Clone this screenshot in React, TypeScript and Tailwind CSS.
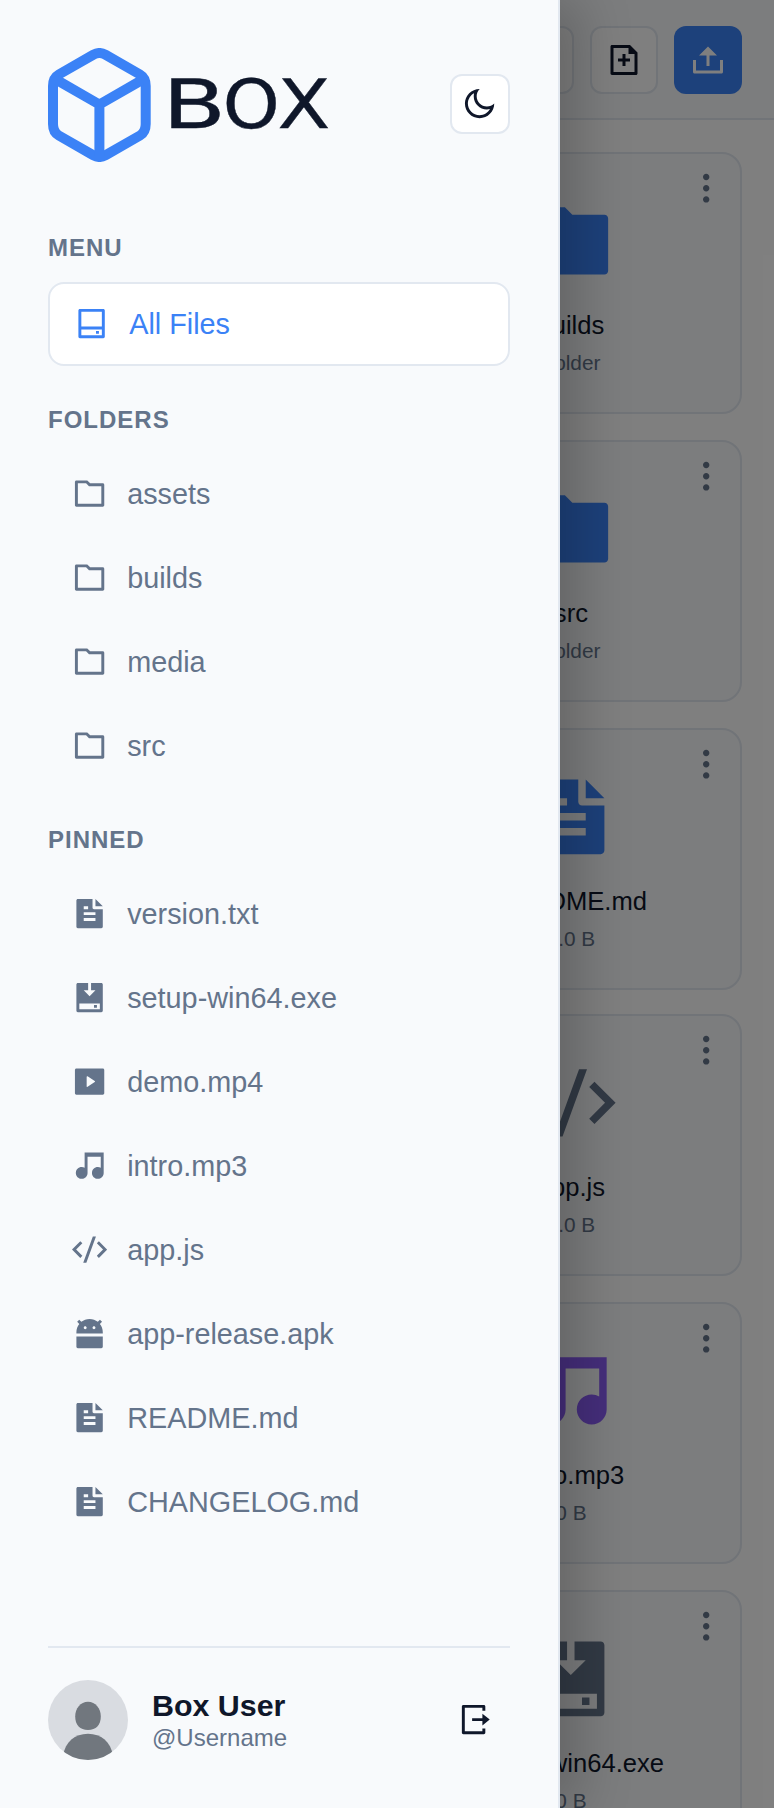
import type { IconType } from "react-icons";
import {
  RiAndroidFill,
  RiCodeSSlashFill,
  RiFileAddLine,
  RiFileTextFill,
  RiFolderAddLine,
  RiFolderFill,
  RiFolderLine,
  RiHardDrive2Line,
  RiInstallFill,
  RiLogoutBoxRLine,
  RiMoonLine,
  RiMore2Fill,
  RiMovieFill,
  RiMusic2Fill,
  RiUpload2Line,
} from "react-icons/ri";

interface Entry {
  name: string;
  icon: IconType;
}

interface Card extends Entry {
  meta: string;
  color: string;
}

const folders = ["assets", "builds", "media", "src"];

const pinned: Entry[] = [
  { name: "version.txt", icon: RiFileTextFill },
  { name: "setup-win64.exe", icon: RiInstallFill },
  { name: "demo.mp4", icon: RiMovieFill },
  { name: "intro.mp3", icon: RiMusic2Fill },
  { name: "app.js", icon: RiCodeSSlashFill },
  { name: "app-release.apk", icon: RiAndroidFill },
  { name: "README.md", icon: RiFileTextFill },
  { name: "CHANGELOG.md", icon: RiFileTextFill },
];

const cards: Card[] = [
  { name: "builds", meta: "Folder", icon: RiFolderFill, color: "text-[#3b82f6]" },
  { name: "src", meta: "Folder", icon: RiFolderFill, color: "text-[#3b82f6]" },
  { name: "README.md", meta: "1.0 B", icon: RiFileTextFill, color: "text-[#3b82f6]" },
  { name: "app.js", meta: "1.0 B", icon: RiCodeSSlashFill, color: "text-[#64748b]" },
  { name: "intro.mp3", meta: "0 B", icon: RiMusic2Fill, color: "text-[#8b5cf6]" },
  { name: "setup-win64.exe", meta: "0 B", icon: RiInstallFill, color: "text-[#64748b]" },
];

// the music note is drawn left of centre in its box
const nudge = (icon: IconType) => (icon === RiMusic2Fill ? "translate-x-[6.7%]" : "");

function Logo() {
  return (
    <svg width="282" height="114" viewBox="0 0 282 114" className="shrink-0">
      <g fill="none" stroke="#3b82f6" strokeWidth="10" strokeLinejoin="round">
        <path d="M45.500 6.600Q51.400 3.400 57.300 6.600L92 26.500Q97.700 29.800 97.700 38V76Q97.700 84.200 92 87.500L57.300 107.400Q51.400 110.600 45.500 107.400L10.800 87.500Q5 84.200 5 76V38Q5 29.800 10.800 26.500Z" />
        <path d="M9 32.200L51.400 56.500L93.800 32.200M51.400 56.500V108" />
      </g>
      <g
        fill="#0f172a"
        stroke="#0f172a"
        strokeWidth="0.4"
        fontFamily="DejaVu Sans"
        fontSize="67"
      >
        <text transform="translate(114.400 79.500) scale(1.38 1)">B</text>
        <text transform="translate(174.800 79.500) scale(1.08 1)">O</text>
        <text transform="translate(229.600 79.500) scale(1.15 1)">X</text>
      </g>
    </svg>
  );
}

function Avatar() {
  return (
    <svg width="80" height="80" viewBox="0 0 80 80" className="shrink-0 rounded-full">
      <rect width="80" height="80" fill="#d9dce1" />
      <path d="M40 21.700C47.500 21.700 52.800 28.500 52.800 36.500C52.800 45 48 50 40 50C32 50 27.200 45 27.200 36.500C27.200 28.500 32.500 21.700 40 21.700Z" fill="#71777e" />
      <path d="M15 76C17 62 27 53.800 40 53.800S63 62 65 76V80H15Z" fill="#71777e" />
    </svg>
  );
}

function Label({ children }: { children: string }) {
  return (
    <h3 className="mt-9 mb-5 h-7 text-[24px] leading-7 font-bold tracking-[1px] text-[#64748b]">
      {children}
    </h3>
  );
}

function NavItem({ name, icon: Icon, active }: Entry & { active?: boolean }) {
  return (
    <a
      className={`mb-1 flex items-center gap-5 rounded-[16px] px-6 text-[28.8px] ${
        active
          ? "h-[84px] border-2 border-[#e2e8f0] bg-white text-[#3b82f6]"
          : "h-20 text-[#64748b]"
      }`}
    >
      <Icon className={`size-[35.2px] shrink-0 ${nudge(Icon)}`} />
      <span className="pt-0.5">{name}</span>
    </a>
  );
}

function Sidebar() {
  return (
    <aside className="absolute inset-y-0 left-0 z-20 flex w-[560px] flex-col border-r-2 border-[#e2e8f0] bg-[#f8fafc] p-12 shadow-[20px_0_50px_rgba(0,0,0,0.2)]">
      <div className="flex h-[114px] items-center justify-between">
        <Logo />
        <button className="mb-0.5 flex size-[60px] items-center justify-center rounded-[12px] border-2 border-[#e2e8f0] bg-white text-[#0f172a]">
          <RiMoonLine className="size-[35.2px]" />
        </button>
      </div>

      <nav className="mt-9 flex flex-1 flex-col">
        <Label>MENU</Label>
        <NavItem name="All Files" icon={RiHardDrive2Line} active />
        <Label>FOLDERS</Label>
        {folders.map((name) => (
          <NavItem key={name} name={name} icon={RiFolderLine} />
        ))}
        <Label>PINNED</Label>
        {pinned.map((item) => (
          <NavItem key={item.name} {...item} />
        ))}
      </nav>

      {/* User */}
      <div className="flex items-center gap-6 border-t-2 border-[#e2e8f0] pt-8">
        <Avatar />
        <div className="flex-1">
          <div className="text-[30.4px] leading-[35px] font-bold text-[#0f172a]">Box User</div>
          <div className="text-[24px] leading-[30px] text-[#64748b]">@Username</div>
        </div>
        <RiLogoutBoxRLine className="mr-[19px] size-[35.2px] text-[#0f172a]" />
      </div>
    </aside>
  );
}

function FileCard({ name, meta, icon: Icon, color }: Card) {
  return (
    <div className="relative flex h-[262px] flex-col items-center rounded-[20px] border-2 border-[#e2e8f0] bg-[#f8fafc] pt-[42px]">
      <RiMore2Fill className="absolute top-[15px] right-[15px] size-[38.4px] text-[#64748b]" />
      <Icon className={`size-[89.6px] shrink-0 ${color} ${nudge(Icon)}`} />
      <div className="mt-[20.4px] text-[25.6px] leading-[38px] text-[#0f172a]">{name}</div>
      <div className="text-[20.8px] leading-[37px] text-[#64748b]">{meta}</div>
    </div>
  );
}

export default function App() {
  const button = "flex size-[68px] items-center justify-center rounded-[12px]";

  return (
    <div className="relative h-[1808px] w-[774px] overflow-hidden bg-white font-['Liberation_Sans',sans-serif]">
      <header className="flex h-[120px] items-center justify-end gap-4 border-b-2 border-[#e2e8f0] bg-[#f8fafc] px-8 pt-0.5">
        <button className={`${button} border-2 border-[#e2e8f0] bg-white text-[#0f172a]`}>
          <RiFolderAddLine className="size-9" />
        </button>
        <button className={`${button} border-2 border-[#e2e8f0] bg-white text-[#0f172a]`}>
          <RiFileAddLine className="size-9" />
        </button>
        <button className={`${button} bg-[#3b82f6] text-white`}>
          <RiUpload2Line className="size-9" />
        </button>
      </header>

      {/* Files */}
      <main className="ml-[399.8px] flex flex-col gap-[26px] pt-8 pr-8 [&>*:nth-child(4)]:-mt-0.5">
        {cards.map((card) => (
          <FileCard key={card.name} {...card} />
        ))}
      </main>

      <div className="absolute inset-0 z-10 bg-black/50" />
      <Sidebar />
    </div>
  );
}
